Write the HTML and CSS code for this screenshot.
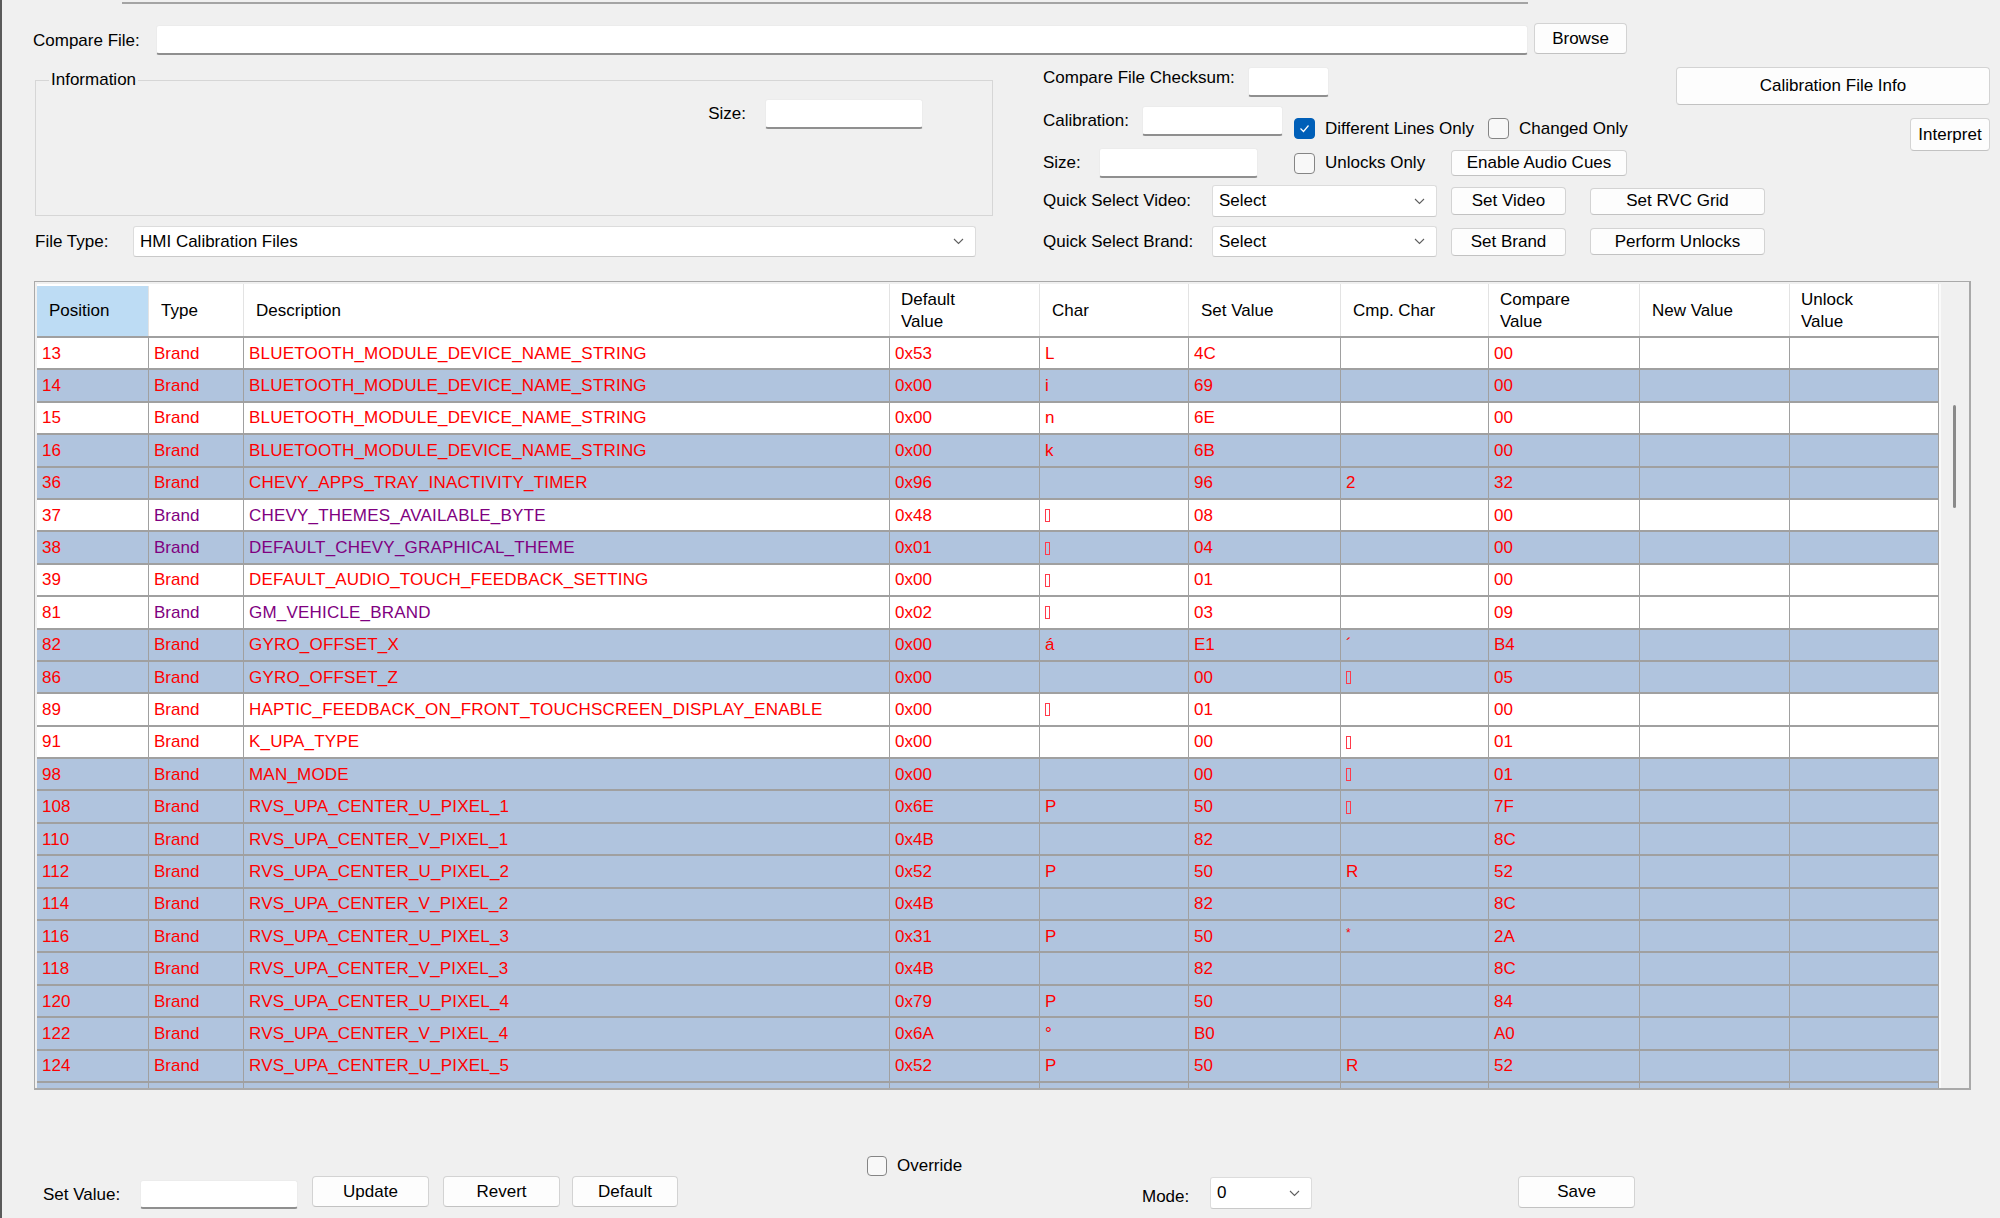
FILE: index.html
```html
<!DOCTYPE html>
<html lang="en">
<head>
  <meta charset="UTF-8">
  <title>Calibration Compare</title>
  <link rel="stylesheet" href="styles.css">
</head>
<body>
  <div class="topline"></div>

  <div class="file-row">
    <label class="lbl w-compare">Compare File:</label>
    <div class="textbox compare-path"></div>
    <button class="btn browse">Browse</button>
  </div>

  <div class="upper">
    <div class="left-col">
      <fieldset class="info">
        <legend>Information</legend>
        <div class="size-row">
          <label class="lbl">Size:</label>
          <div class="textbox info-size"></div>
        </div>
      </fieldset>
      <div class="filetype-row">
        <label class="lbl w-filetype">File Type:</label>
        <div class="combo filetype">
          <span>HMI Calibration Files</span>
          <svg width="11" height="7" viewBox="0 0 11 7"><path d="M1 1l4.5 4.5L10 1" fill="none" stroke="#5f5f5f" stroke-width="1.1"/></svg>
        </div>
      </div>
    </div>

    <div class="right">
      <div class="rows-top">
        <div class="row-r r1">
          <label class="lbl w-checksum">Compare File Checksum:</label>
          <div class="textbox checksum"></div>
        </div>
        <div class="row-r r2">
          <label class="lbl w-calib">Calibration:</label>
          <div class="textbox calib"></div>
          <label class="check top-check diff"><span class="box checked"><svg width="11" height="9" viewBox="0 0 11 9"><path d="M1.5 4.5l3 3 5-6" fill="none" stroke="#fff" stroke-width="1.2"/></svg></span>Different Lines Only</label>
          <label class="check top-check"><span class="box"></span>Changed Only</label>
        </div>
        <div class="row-r r3">
          <label class="lbl w-size">Size:</label>
          <div class="textbox size2"></div>
          <label class="check unlocks"><span class="box"></span>Unlocks Only</label>
          <button class="btn audio">Enable Audio Cues</button>
        </div>
      </div>
      <div class="side">
        <button class="btn cal-info">Calibration File Info</button>
        <button class="btn interpret">Interpret</button>
      </div>
      <div class="rows-bottom">
        <div class="row-r r4">
          <label class="lbl w-quick">Quick Select Video:</label>
          <div class="combo quick">
            <span>Select</span>
            <svg width="11" height="7" viewBox="0 0 11 7"><path d="M1 1l4.5 4.5L10 1" fill="none" stroke="#5f5f5f" stroke-width="1.1"/></svg>
          </div>
          <button class="btn set-btn">Set Video</button>
          <button class="btn wide-btn">Set RVC Grid</button>
        </div>
        <div class="row-r r5">
          <label class="lbl w-quick">Quick Select Brand:</label>
          <div class="combo quick">
            <span>Select</span>
            <svg width="11" height="7" viewBox="0 0 11 7"><path d="M1 1l4.5 4.5L10 1" fill="none" stroke="#5f5f5f" stroke-width="1.1"/></svg>
          </div>
          <button class="btn set-btn">Set Brand</button>
          <button class="btn wide-btn">Perform Unlocks</button>
        </div>
      </div>
    </div>
  </div>

  <div class="grid">
    <div class="grid-main">
      <div class="grid-head">
        <div class="hcell selected">Position</div>
        <div class="hcell">Type</div>
        <div class="hcell">Description</div>
        <div class="hcell two">Default<br>Value</div>
        <div class="hcell">Char</div>
        <div class="hcell">Set Value</div>
        <div class="hcell">Cmp. Char</div>
        <div class="hcell two">Compare<br>Value</div>
        <div class="hcell">New Value</div>
        <div class="hcell two">Unlock<br>Value</div>
      </div>
      <div class="grid-body">
        <div class="grow"><span>13</span><span>Brand</span><span>BLUETOOTH_MODULE_DEVICE_NAME_STRING</span><span>0x53</span><span>L</span><span>4C</span><span></span><span>00</span><span></span><span></span></div>
        <div class="grow alt"><span>14</span><span>Brand</span><span>BLUETOOTH_MODULE_DEVICE_NAME_STRING</span><span>0x00</span><span>i</span><span>69</span><span></span><span>00</span><span></span><span></span></div>
        <div class="grow"><span>15</span><span>Brand</span><span>BLUETOOTH_MODULE_DEVICE_NAME_STRING</span><span>0x00</span><span>n</span><span>6E</span><span></span><span>00</span><span></span><span></span></div>
        <div class="grow alt"><span>16</span><span>Brand</span><span>BLUETOOTH_MODULE_DEVICE_NAME_STRING</span><span>0x00</span><span>k</span><span>6B</span><span></span><span>00</span><span></span><span></span></div>
        <div class="grow alt"><span>36</span><span>Brand</span><span>CHEVY_APPS_TRAY_INACTIVITY_TIMER</span><span>0x96</span><span></span><span>96</span><span>2</span><span>32</span><span></span><span></span></div>
        <div class="grow brand"><span>37</span><span>Brand</span><span>CHEVY_THEMES_AVAILABLE_BYTE</span><span>0x48</span><span><i class="nochar"></i></span><span>08</span><span></span><span>00</span><span></span><span></span></div>
        <div class="grow alt brand"><span>38</span><span>Brand</span><span>DEFAULT_CHEVY_GRAPHICAL_THEME</span><span>0x01</span><span><i class="nochar"></i></span><span>04</span><span></span><span>00</span><span></span><span></span></div>
        <div class="grow"><span>39</span><span>Brand</span><span>DEFAULT_AUDIO_TOUCH_FEEDBACK_SETTING</span><span>0x00</span><span><i class="nochar"></i></span><span>01</span><span></span><span>00</span><span></span><span></span></div>
        <div class="grow brand"><span>81</span><span>Brand</span><span>GM_VEHICLE_BRAND</span><span>0x02</span><span><i class="nochar"></i></span><span>03</span><span></span><span>09</span><span></span><span></span></div>
        <div class="grow alt"><span>82</span><span>Brand</span><span>GYRO_OFFSET_X</span><span>0x00</span><span>á</span><span>E1</span><span>´</span><span>B4</span><span></span><span></span></div>
        <div class="grow alt"><span>86</span><span>Brand</span><span>GYRO_OFFSET_Z</span><span>0x00</span><span></span><span>00</span><span><i class="nochar"></i></span><span>05</span><span></span><span></span></div>
        <div class="grow"><span>89</span><span>Brand</span><span>HAPTIC_FEEDBACK_ON_FRONT_TOUCHSCREEN_DISPLAY_ENABLE</span><span>0x00</span><span><i class="nochar"></i></span><span>01</span><span></span><span>00</span><span></span><span></span></div>
        <div class="grow"><span>91</span><span>Brand</span><span>K_UPA_TYPE</span><span>0x00</span><span></span><span>00</span><span><i class="nochar"></i></span><span>01</span><span></span><span></span></div>
        <div class="grow alt"><span>98</span><span>Brand</span><span>MAN_MODE</span><span>0x00</span><span></span><span>00</span><span><i class="nochar"></i></span><span>01</span><span></span><span></span></div>
        <div class="grow alt"><span>108</span><span>Brand</span><span>RVS_UPA_CENTER_U_PIXEL_1</span><span>0x6E</span><span>P</span><span>50</span><span><i class="nochar"></i></span><span>7F</span><span></span><span></span></div>
        <div class="grow alt"><span>110</span><span>Brand</span><span>RVS_UPA_CENTER_V_PIXEL_1</span><span>0x4B</span><span></span><span>82</span><span></span><span>8C</span><span></span><span></span></div>
        <div class="grow alt"><span>112</span><span>Brand</span><span>RVS_UPA_CENTER_U_PIXEL_2</span><span>0x52</span><span>P</span><span>50</span><span>R</span><span>52</span><span></span><span></span></div>
        <div class="grow alt"><span>114</span><span>Brand</span><span>RVS_UPA_CENTER_V_PIXEL_2</span><span>0x4B</span><span></span><span>82</span><span></span><span>8C</span><span></span><span></span></div>
        <div class="grow alt"><span>116</span><span>Brand</span><span>RVS_UPA_CENTER_U_PIXEL_3</span><span>0x31</span><span>P</span><span>50</span><span class="tiny">*</span><span>2A</span><span></span><span></span></div>
        <div class="grow alt"><span>118</span><span>Brand</span><span>RVS_UPA_CENTER_V_PIXEL_3</span><span>0x4B</span><span></span><span>82</span><span></span><span>8C</span><span></span><span></span></div>
        <div class="grow alt"><span>120</span><span>Brand</span><span>RVS_UPA_CENTER_U_PIXEL_4</span><span>0x79</span><span>P</span><span>50</span><span></span><span>84</span><span></span><span></span></div>
        <div class="grow alt"><span>122</span><span>Brand</span><span>RVS_UPA_CENTER_V_PIXEL_4</span><span>0x6A</span><span>°</span><span>B0</span><span></span><span>A0</span><span></span><span></span></div>
        <div class="grow alt"><span>124</span><span>Brand</span><span>RVS_UPA_CENTER_U_PIXEL_5</span><span>0x52</span><span>P</span><span>50</span><span>R</span><span>52</span><span></span><span></span></div>
        <div class="grow alt"><span></span><span></span><span></span><span></span><span></span><span></span><span></span><span></span><span></span><span></span></div>
      </div>
    </div>
    <div class="vscroll"><div class="thumb"></div></div>
  </div>

  <div class="override-row">
    <label class="check"><span class="box"></span>Override</label>
  </div>

  <div class="bottom-row">
    <label class="lbl w-setvalue">Set Value:</label>
    <div class="textbox setvalue"></div>
    <button class="btn act update">Update</button>
    <button class="btn act revert">Revert</button>
    <button class="btn act default">Default</button>
    <label class="lbl w-mode">Mode:</label>
    <div class="combo mode">
      <span>0</span>
      <svg width="11" height="7" viewBox="0 0 11 7"><path d="M1 1l4.5 4.5L10 1" fill="none" stroke="#5f5f5f" stroke-width="1.1"/></svg>
    </div>
    <button class="btn save">Save</button>
  </div>
</body>
</html>
```

FILE: styles.css
```css
:root {
  --ui-font: "Liberation Sans", Arial, sans-serif;
  --row-blue: #b0c4de;
  --grid-line: #a0a0a0;
  --cols: 112px 95px 646px 150px 149px 152px 148px 151px 150px 149px;
}
* {
  box-sizing: border-box;
}
body {
  margin: 0;
  height: 1218px;
  overflow: hidden;
  background-color: #f0f0f0;
  border-left: 2px solid #5a5a5a;
  font-family: var(--ui-font);
  font-size: 17px;
  color: #000;
}
.lbl {
  display: block;
  white-space: nowrap;
}

/* generic controls */
.textbox {
  height: 30px;
  background-color: #fff;
  border: 1px solid #ececec;
  border-bottom: 2px solid #8f8f8f;
  border-radius: 3px;
}
.btn {
  display: block;
  padding: 0;
  background-color: #fdfdfd;
  border: 1px solid #d3d3d3;
  border-bottom-color: #c2c2c2;
  border-radius: 4px;
  font-family: var(--ui-font);
  font-size: 17px;
  color: #000;
  text-align: center;
}
.combo {
  display: flex;
  align-items: center;
  justify-content: space-between;
  padding: 0 11px 0 6px;
  background-color: #fff;
  border: 1px solid #dcdcdc;
  border-bottom-color: #c9c9c9;
  border-radius: 3px;
}
.check {
  display: flex;
  align-items: center;
  gap: 10px;
  white-space: nowrap;
}
.box {
  display: flex;
  align-items: center;
  justify-content: center;
  width: 21px;
  height: 21px;
  border: 1px solid #858585;
  border-radius: 4px;
  background-color: #f8f8f8;
}
.box.checked {
  background-color: #005fb8;
  border-color: #005fb8;
}

/* top */
.topline {
  width: 1406px;
  height: 4px;
  margin-left: 120px;
  border-bottom: 2px solid #a4a4a4;
}
.file-row {
  display: flex;
  align-items: flex-start;
  height: 32px;
  margin-top: 19px;
  padding-left: 31px;
}
.file-row .lbl {
  line-height: 30px;
  margin-top: 3px;
}
.w-compare { width: 123px; }
.compare-path {
  width: 1372px;
  margin-top: 2px;
}
.browse {
  width: 93px;
  height: 31px;
  margin-left: 6px;
}

.upper {
  display: flex;
  gap: 50px;
  margin-top: 12px;
  padding-left: 33px;
}
.left-col {
  width: 958px;
}
.info {
  height: 146px;
  margin: 3px 0 0;
  padding: 0 0 0 13px;
  border: 1px solid #d6d6d6;
}
.info legend {
  padding: 0 2px;
  line-height: 20px;
}
.size-row {
  display: flex;
  justify-content: flex-end;
  align-items: center;
  gap: 19px;
  margin-top: 9px;
  padding-right: 69px;
}
.info-size { width: 158px; }
.filetype-row {
  display: flex;
  align-items: center;
  margin-top: 10px;
}
.w-filetype { width: 98px; }
.filetype {
  width: 843px;
  height: 31px;
}

.right {
  display: grid;
  grid-template-columns: 633px 314px;
}
.rows-top {
  grid-column: 1;
  grid-row: 1;
}
.side {
  grid-column: 2;
  grid-row: 1;
  display: flex;
  flex-direction: column;
  align-items: flex-end;
}
.rows-bottom {
  grid-column: 1 / 3;
  grid-row: 2;
}
.row-r {
  display: flex;
  align-items: center;
}
.r1 { height: 30px; align-items: flex-start; }
.r1 .lbl { line-height: 22px; }
.r2 { height: 30px; margin-top: 9px; align-items: flex-start; }
.r2 .lbl { line-height: 30px; }
.r3 { height: 30px; margin-top: 12px; }
.r4 { height: 32px; margin-top: 7px; }
.r5 { height: 31px; margin-top: 9px; }

.w-checksum { width: 205px; }
.checksum { width: 81px; }
.w-calib { width: 99px; }
.calib { width: 141px; }
.top-check { margin-top: 12px; }
.diff {
  width: 194px;
  margin-left: 11px;
}
.w-size { width: 56px; }
.size2 { width: 159px; }
.unlocks {
  width: 157px;
  margin-left: 36px;
}
.audio {
  width: 176px;
  height: 26px;
}
.cal-info {
  width: 314px;
  height: 38px;
}
.interpret {
  width: 80px;
  height: 33px;
  margin-top: 13px;
}
.w-quick { width: 169px; }
.quick {
  width: 225px;
  height: 100%;
}
.set-btn {
  width: 115px;
  height: 28px;
  margin-left: 14px;
}
.wide-btn {
  width: 175px;
  height: 27px;
  margin-left: 24px;
}

/* data grid */
.grid {
  display: flex;
  width: 1937px;
  height: 809px;
  margin: 24px 0 0 32px;
  padding: 2px 0 0 2px;
  border: 1px solid #a9a9a9;
  border-bottom-width: 2px;
  border-right-width: 2px;
  overflow: hidden;
}
.grid-main {
  width: 1902px;
  background-color: #fff;
}
.grid-head {
  display: grid;
  grid-template-columns: var(--cols);
  height: 54px;
  border-bottom: 2px solid var(--grid-line);
}
.hcell {
  display: flex;
  align-items: center;
  padding: 2px 0 0 12px;
  border-right: 1px solid #e3e3e3;
  line-height: 22px;
}
.hcell.two {
  padding-left: 11px;
}
.hcell.selected {
  margin-top: 2px;
  padding-top: 0;
  background-color: #bddcf4;
}
.grid-body {
  height: 750px;
  overflow: hidden;
}
.grow {
  display: grid;
  grid-template-columns: var(--cols);
  height: 32.4px;
  background-color: #fff;
  border-bottom: 2px solid var(--grid-line);
  color: #ff0000;
}
.grow.alt {
  background-color: var(--row-blue);
}
.grow span {
  display: flex;
  align-items: center;
  padding: 1px 0 0 5px;
  border-right: 1px solid var(--grid-line);
  white-space: nowrap;
  overflow: hidden;
}
.grow span:nth-child(3) {
  letter-spacing: 0.2px;
}
.grow.brand span:nth-child(2),
.grow.brand span:nth-child(3) {
  color: #800080;
}
.grow span.tiny {
  font-size: 12px;
  align-items: flex-start;
  padding-top: 5px;
}
.nochar {
  display: inline-block;
  width: 5px;
  height: 13px;
  border: 1px solid #ff3a4a;
}
.vscroll {
  width: 30px;
  background-color: #f0f0f0;
  border-left: 2px solid #fafafa;
}
.thumb {
  width: 3px;
  height: 103px;
  margin: 121px 0 0 12px;
  background-color: #8a8a8a;
  border-radius: 2px;
}

/* bottom */
.override-row {
  margin-top: 66px;
  padding-left: 865px;
  height: 20px;
}
.override-row .box {
  width: 20px;
  height: 20px;
}
.bottom-row {
  display: flex;
  align-items: flex-start;
  padding-left: 41px;
}
.bottom-row .lbl {
  line-height: 29px;
  margin-top: 4px;
}
.w-setvalue { width: 97px; }
.setvalue {
  width: 158px;
  height: 29px;
  margin-top: 4px;
}
.act {
  width: 117px;
  height: 31px;
  margin-left: 14px;
}
.act.default {
  width: 106px;
  margin-left: 12px;
}
.w-mode {
  width: 68px;
  margin-left: 464px;
  margin-top: 6px !important;
}
.mode {
  width: 102px;
  height: 32px;
  margin-top: 1px;
}
.save {
  width: 117px;
  height: 32px;
  margin-left: 206px;
}
```
